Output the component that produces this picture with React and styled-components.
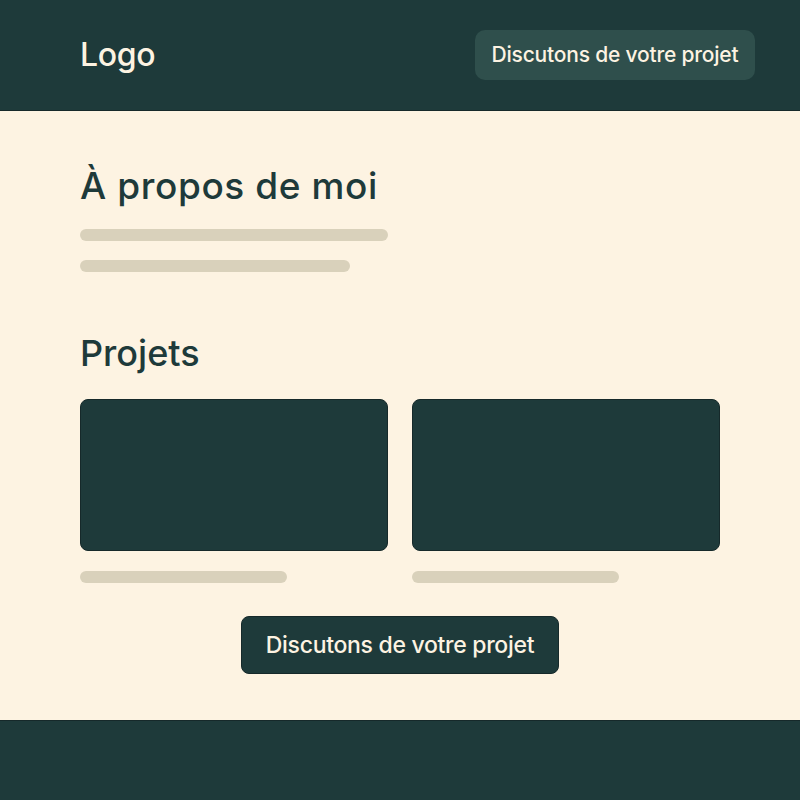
import React from "react";
import styled, { createGlobalStyle } from "styled-components";

const GlobalStyle = createGlobalStyle`
  html, body {
    margin: 0;
    padding: 0;
    background: #fdf3e2;
  }
  body {
    font-family: Inter, "Noto Sans", sans-serif;
    color: #1e3a3a;
  }
`;

function App() {
  return (
    <Page>
      <GlobalStyle />
      <Header>
        <Logo>Logo</Logo>
        <HeaderButton>Discutons de votre projet</HeaderButton>
      </Header>
      <Main>
        <Section>
          <Title size={37} spacing={0.6}>À propos de moi</Title>
          <Line width={308} />
          <Line width={270} gap={19} />
        </Section>
        <Section top={60}>
          <Title size={36} spacing={0}>Projets</Title>
          <Grid>
            <Project>
              <Card />
              <Line width={207} gap={20} />
            </Project>
            <Project>
              <Card />
              <Line width={207} gap={20} />
            </Project>
          </Grid>
        </Section>
        <Center>
          <CtaButton>Discutons de votre projet</CtaButton>
        </Center>
      </Main>
      <Footer />
    </Page>
  );
}

const Page = styled.div`
  width: 800px;
  min-height: 800px;
  display: flex;
  flex-direction: column;
`;

const Header = styled.header`
  height: 111px;
  background: #1e3a3a;
  display: flex;
  align-items: center;
  justify-content: space-between;
  padding: 0 45px 0 80px;
  border-bottom: 1px solid #16292a;
  box-sizing: border-box;
`;

const Logo = styled.div`
  font-size: 32px;
  font-weight: 500;
  color: #fdf3e2;
  letter-spacing: -0.3px;
  margin-top: -2px;
`;

const HeaderButton = styled.button`
  width: 280px;
  height: 50px;
  margin-top: -1px;
  border: none;
  border-radius: 10px;
  background: #2f4f4c;
  color: #fdf3e2;
  font-family: Inter, sans-serif;
  font-size: 21px;
  font-weight: 500;
  letter-spacing: -0.2px;
  cursor: pointer;
`;

const Main = styled.main`
  flex: 1;
  padding: 54px 80px 46px;
  display: flex;
  flex-direction: column;
`;

const Section = styled.section`
  display: flex;
  flex-direction: column;
  margin-top: ${(p) => p.top || 0}px;
`;

const Title = styled.h2`
  margin: 0 0 22px;
  font-size: ${(p) => p.size}px;
  line-height: 42px;
  font-weight: 500;
  letter-spacing: ${(p) => p.spacing}px;
  color: #1e3a3a;
`;

const Line = styled.div`
  width: ${(p) => p.width}px;
  height: 12px;
  margin-top: ${(p) => p.gap || 0}px;
  border-radius: 6px;
  background: #d9d1bb;
`;

const Grid = styled.div`
  display: grid;
  grid-template-columns: 1fr 1fr;
  gap: 24px;
  margin-top: 3px;
`;

const Project = styled.div`
  display: flex;
  flex-direction: column;
`;

const Card = styled.div`
  height: 152px;
  border-radius: 8px;
  background: #1e3a3a;
  border: 1px solid #16292a;
  box-sizing: border-box;
`;

const Center = styled.div`
  display: flex;
  justify-content: center;
  margin-top: 33px;
`;

const CtaButton = styled.button`
  width: 318px;
  height: 58px;
  border: 1px solid #16292a;
  border-radius: 8px;
  background: #1e3a3a;
  color: #fdf3e2;
  font-family: Inter, sans-serif;
  font-size: 23px;
  font-weight: 500;
  letter-spacing: -0.3px;
  cursor: pointer;
`;

const Footer = styled.footer`
  height: 80px;
  background: #1e3a3a;
  border-top: 1px solid #16292a;
  box-sizing: border-box;
`;

export default App;
